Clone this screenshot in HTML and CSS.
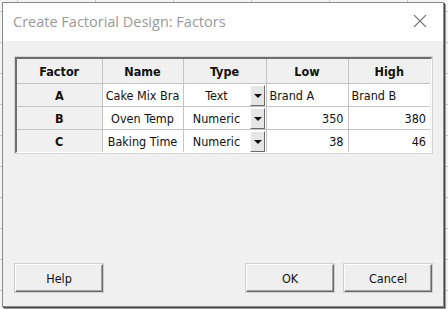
FILE: index.html
```html
<!DOCTYPE html>
<html>
<head>
    <meta charset="UTF-8">
    <title>Create Factorial Design: Factors</title>
    <link rel="stylesheet" href="styles.css">
</head>
<body>
    <div class="dialog">
        <div class="titlebar">
            <span class="title">Create Factorial Design: Factors</span>
            <svg class="close" width="14" height="14" viewBox="0 0 14 14">
                <path d="M1 1 L13 13 M13 1 L1 13" stroke="#7a7a7a" stroke-width="1.1" fill="none"/>
            </svg>
        </div>
        <div class="content">
            <div class="grid">
                <table>
                    <colgroup>
                        <col class="c-factor">
                        <col class="c-name">
                        <col class="c-type">
                        <col class="c-low">
                        <col class="c-high">
                    </colgroup>
                    <tr>
                        <th>Factor</th>
                        <th>Name</th>
                        <th>Type</th>
                        <th>Low</th>
                        <th>High</th>
                    </tr>
                    <tr>
                        <td class="key">A</td>
                        <td class="name">Cake Mix Bra</td>
                        <td class="type"><div class="combo"><span class="combo-text">Text</span><span class="drop"></span></div></td>
                        <td class="left">Brand A</td>
                        <td class="left">Brand B</td>
                    </tr>
                    <tr>
                        <td class="key">B</td>
                        <td class="name">Oven Temp</td>
                        <td class="type"><div class="combo"><span class="combo-text">Numeric</span><span class="drop"></span></div></td>
                        <td class="right">350</td>
                        <td class="right">380</td>
                    </tr>
                    <tr>
                        <td class="key">C</td>
                        <td class="name">Baking Time</td>
                        <td class="type"><div class="combo"><span class="combo-text">Numeric</span><span class="drop"></span></div></td>
                        <td class="right">38</td>
                        <td class="right">46</td>
                    </tr>
                </table>
            </div>
            <div class="buttons">
                <button type="button" class="btn">Help</button>
                <span class="fill"></span>
                <button type="button" class="btn">OK</button>
                <button type="button" class="btn">Cancel</button>
            </div>
        </div>
    </div>
</body>
</html>
```

FILE: styles.css
```css
body {
    margin: 0;
    width: 448px;
    height: 309px;
    overflow: hidden;
    background-color: #f4f4f4;
    background-image:
        repeating-linear-gradient(to right, transparent 0, transparent 17px, #c8c8c8 17px, #c8c8c8 18px, transparent 18px, transparent 78px),
        repeating-linear-gradient(to bottom, transparent 0, transparent 11px, #c8c8c8 11px, #c8c8c8 12px, transparent 12px, transparent 31px);
    font-family: "DejaVu Sans Condensed", "DejaVu Sans", sans-serif;
}
.dialog {
    margin: 2px 0 0 2px;
    width: 440px;
    height: 303px;
    border: 1px solid #8a8a8a;
    box-shadow: 1px 1px 0 #4a4a4a, 2px 2px 0 #9a9a9a;
    display: flex;
    flex-direction: column;
    background-color: #f0f0f0;
}
.titlebar {
    height: 38px;
    background-color: #ffffff;
    display: flex;
    align-items: center;
    justify-content: space-between;
    padding: 0 16px 0 10px;
}
.title {
    font-family: "Open Sans", sans-serif;
    font-size: 14.5px;
    color: #9a9a9a;
    margin-top: -2px;
}
.close {
    margin-top: -2px;
}
.content {
    flex: 1;
    display: flex;
    flex-direction: column;
    justify-content: space-between;
    padding: 16px 11px 14px 12px;
}
.grid {
    width: 414px;
    border-top: 2px solid #6d6d6d;
    border-left: 2px solid #6d6d6d;
    border-right: 1px solid #ffffff;
    border-bottom: 1px solid #ffffff;
    outline: 1px solid #d6d6d6;
}
table {
    border-collapse: collapse;
    table-layout: fixed;
    width: 413px;
    font-size: 12.5px;
    color: #111111;
}
.c-factor { width: 85px; }
.c-name { width: 81px; }
.c-type { width: 83px; }
.c-low { width: 82px; }
.c-high { width: 82px; }
th, td {
    border: 1px solid #c4c4c4;
    padding: 0 4px;
    height: 22px;
    white-space: nowrap;
    overflow: hidden;
}
tr:first-child th {
    border-top: none;
    height: 24px;
}
th:first-child, td:first-child {
    border-left: none;
}
th:last-child, td:last-child {
    border-right: none;
}
tr:last-child td {
    border-bottom: none;
}
th {
    background-color: #f0f0f0;
    font-weight: bold;
    text-align: center;
}
td {
    background-color: #ffffff;
}
.key {
    background-color: #f0f0f0;
    font-weight: bold;
    text-align: center;
}
.name {
    text-align: center;
    padding: 0 2px;
    text-overflow: clip;
}
.type {
    padding: 0 1px 0 0;
}
.combo {
    display: flex;
    align-items: center;
    height: 22px;
}
.combo-text {
    flex: 1;
    text-align: center;
}
.drop {
    width: 13px;
    height: 19px;
    background-color: #e6e6e6;
    border-top: 1px solid #ffffff;
    border-left: 1px solid #ffffff;
    border-right: 1px solid #6a6a6a;
    border-bottom: 1px solid #6a6a6a;
    position: relative;
}
.drop::after {
    content: "";
    position: absolute;
    left: 3px;
    top: 8px;
    border-left: 4px solid transparent;
    border-right: 4px solid transparent;
    border-top: 4px solid #111111;
}
.left {
    text-align: left;
    padding-left: 3px;
}
.right {
    text-align: right;
    padding-right: 4px;
}
.buttons {
    display: flex;
    gap: 10px;
}
.fill {
    flex: 1;
}
.btn {
    width: 88px;
    height: 28px;
    font-family: "DejaVu Sans Condensed", "DejaVu Sans", sans-serif;
    font-size: 12.5px;
    color: #111111;
    background-color: #efefef;
    border-top: 1px solid #ffffff;
    border-left: 1px solid #ffffff;
    border-right: 1px solid #6a6a6a;
    border-bottom: 1px solid #6a6a6a;
    box-shadow: inset -1px -1px 0 #a0a0a0, 0 0 0 1px #d0d0d0;
    padding: 0;
}
```
